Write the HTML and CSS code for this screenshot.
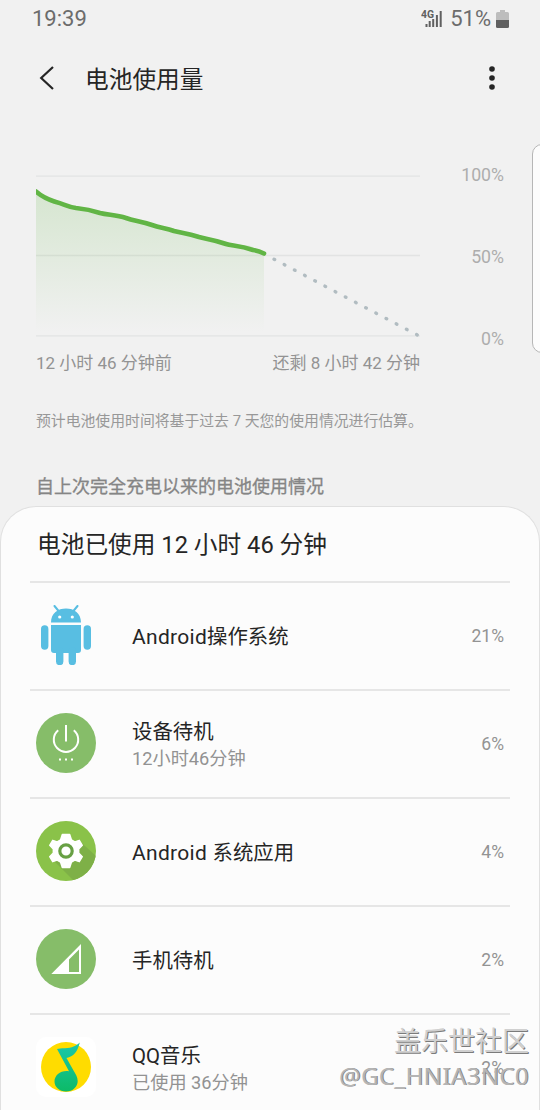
FILE: index.html
```html
<!DOCTYPE html>
<html lang="zh-CN">
<head>
<meta charset="utf-8">
<title>电池使用量</title>
<link rel="stylesheet" href="styles.css">
</head>
<body>
<main class="screen">
  <div class="status">
    <span class="clock">19:39</span>
    <svg class="signal" width="22" height="20" viewBox="0 0 22 20">
      <text class="network" x="0" y="9" textLength="13" lengthAdjust="spacingAndGlyphs">4G</text>
      <path d="M5.500 15v3M8.700 12v6M12.200 10v8M15.900 6v12M19.700 2v16" stroke="#606060" stroke-width="2"/>
    </svg>
    <span class="level">51%</span>
    <svg class="battery" width="13" height="18" viewBox="0 0 13 18">
      <path d="M4 0h5v2h2.500q1.500 0 1.500 1.500V10H0V3.500Q0 2 1.500 2H4z" fill="#bdbdbd"/>
      <path d="M0 10h13v6.500q0 1.500-1.500 1.500h-10Q0 18 0 16.500z" fill="#606060"/>
    </svg>
  </div>
  <header class="bar">
    <svg class="back" width="16" height="26" viewBox="0 0 16 26"><path d="M14 2L2.200 13L14 24" fill="none" stroke="#252525" stroke-width="2.200"/></svg>
    <h1 class="title">电池使用量</h1>
    <svg class="more" width="6" height="24" viewBox="0 0 6 24"><g fill="#252525"><circle cx="3" cy="3" r="2.800"/><circle cx="3" cy="12" r="2.800"/><circle cx="3" cy="21" r="2.800"/></g></svg>
  </header>
  <section class="usage">
    <div class="plot">
      <svg class="chart" width="384" height="172" viewBox="0 0 384 172">
        <defs><linearGradient id="charge" gradientUnits="userSpaceOnUse" x1="0" y1="22" x2="0" y2="162"><stop offset="0" stop-color="#68b84b" stop-opacity=".2"/><stop offset=".45" stop-color="#68b84b" stop-opacity=".11"/><stop offset="1" stop-color="#68b84b" stop-opacity="0"/></linearGradient></defs>
        <path d="M0 6.200H384M0 85.500H384M0 165.800H384" stroke="#e2e3e3" stroke-width="1.300"/>
        <path d="M0 22C8 29 16 31 34 37S52 38 64 43S82 44 98 50S118 55 137 61S153 62 163 66S179 67 192 72S208 73 217 77L228 83V163H0z" fill="url(#charge)"/>
        <path d="M0 21.500C8 28.500 14 30 20 32C28 34 32 37 40 38C50 39 55 40 64 43C72 45 80 45 90 48C98 51 105 51 116 55C124 58 130 58 138 61C145 63 151 63 163 67C170 69 176 69 190 74C196 76 203 75 217 80C223 81 225 82 228 83.500" fill="none" stroke="#61b545" stroke-width="4.600" stroke-linecap="round" stroke-linejoin="round"/>
        <path d="M238 89.200L381.300 165" fill="none" stroke="#b1bcc1" stroke-width="3.400" stroke-linecap="round" stroke-dasharray=".8 10.720"/>
      </svg>
      <div class="times"><span>12 小时 46 分钟前</span><span>还剩 8 小时 42 分钟</span></div>
    </div>
    <div class="scale"><span>100%</span><span>50%</span><span>0%</span></div>
  </section>
  <p class="note">预计电池使用时间将基于过去 7 天您的使用情况进行估算。</p>
  <h2 class="caption">自上次完全充电以来的电池使用情况</h2>
  <section class="card">
    <h3 class="total">电池已使用 12 小时 46 分钟</h3>
    <div class="row">
      <svg class="icon" width="60" height="60" viewBox="0 0 60 60">
        <path d="M18.500 1L23 6.500M41.500 1L37 6.500" stroke="#58bee2" stroke-width="2" stroke-linecap="round"/>
        <path d="M15 17.500C15 8 22 3.500 30 3.500s15 4.500 15 14zM15 20h30v25q0 3-3 3H18q-3 0-3-3z" fill="#58bee2"/>
        <path d="M8.700 24v17M51.300 24v17M23.700 46v10.500M36.300 46v10.500" stroke="#58bee2" stroke-width="7.400" stroke-linecap="round"/>
        <circle cx="23.700" cy="12" r="1.600" fill="#fff"/><circle cx="36.300" cy="12" r="1.600" fill="#fff"/>
      </svg>
      <div class="label"><span class="name"><span class="latin">Android</span>操作系统</span></div><span class="percent">21%</span>
    </div>
    <div class="row">
      <svg class="icon" width="60" height="60" viewBox="0 0 60 60">
        <circle cx="30" cy="30" r="30" fill="#86bd69"/>
        <path d="M22.200 17.300A12.200 12.200 0 1 0 37.800 17.300M30 12v16.500" fill="none" stroke="#fff" stroke-width="2"/>
        <path d="M23 46.500h2M29 46.500h2M35 46.500h2" stroke="#fff" stroke-width="2"/>
      </svg>
      <div class="label"><span class="name">设备待机</span><span class="detail">12小时46分钟</span></div><span class="percent">6%</span>
    </div>
    <div class="row">
      <svg class="icon" width="60" height="60" viewBox="0 0 60 60">
        <defs><clipPath id="disc"><circle cx="30" cy="30" r="30"/></clipPath></defs>
        <circle cx="30" cy="30" r="30" fill="#8ac249"/>
        <path d="M15 37L38 60H60V35L43.500 20z" fill="#7eb047" clip-path="url(#disc)"/>
        <path d="M26.300 13.500h7.400l1.700 5.300 3.400 2 4.500-1.500 3 5-3.600 3.700v4l3.600 3.700-3 5-4.500-1.500-3.400 2-1.700 5.300h-7.400l-1.700-5.300-3.400-2-4.500 1.500-3-5 3.600-3.700v-4l-3.600-3.700 3-5 4.500 1.500 3.400-2z" fill="#fff" stroke="#fff" stroke-width="1.400" stroke-linejoin="round"/>
        <circle cx="30" cy="30" r="6.200" fill="#fff" stroke="#68a044" stroke-width="3.200"/>
      </svg>
      <div class="label"><span class="name"><span class="latin">Android </span>系统应用</span></div><span class="percent">4%</span>
    </div>
    <div class="row">
      <svg class="icon" width="60" height="60" viewBox="0 0 60 60">
        <circle cx="30" cy="30" r="30" fill="#86bd69"/>
        <path d="M15.300 45L45 15V45zM33 30.500V43H43V20.500z" fill="#fff" fill-rule="evenodd"/>
      </svg>
      <div class="label"><span class="name">手机待机</span></div><span class="percent">2%</span>
    </div>
    <div class="row">
      <svg class="icon" width="60" height="60" viewBox="0 0 60 60">
        <defs><linearGradient id="melody" x1="0" y1="0" x2="0" y2="1"><stop offset="0" stop-color="#1ac8ac"/><stop offset="1" stop-color="#0dba67"/></linearGradient></defs>
        <rect width="60" height="60" rx="10" fill="#fff"/>
        <circle cx="30" cy="30" r="25" fill="#ffdc00"/>
        <path d="M43.800 5.500C40 9 36 11 29 11.300C25 11.400 23 11.500 21 12L33 34.200C25 33 18.500 38 18.500 44.500C18.500 50 23.500 54.500 30 54.500C37 54.500 41.700 49.500 41.700 44C41.700 40 39.500 37 37.500 33.500L30.500 21C37.500 19.500 41.500 15 43.800 5.500z" fill="url(#melody)"/>
      </svg>
      <div class="label"><span class="name">QQ音乐</span><span class="detail">已使用 36分钟</span></div><span class="percent">2%</span>
    </div>
  </section>
  <div class="edge"></div>
  <div class="watermark"><span class="community">盖乐世社区</span><span class="author">@GC_HNIA3NC0</span></div>
</main>
</body>
</html>
```
FILE: styles.css
```css
* { box-sizing: border-box; }
body { margin: 0; background: #f1f1f1; font-family: Roboto, "Noto Sans CJK SC", sans-serif; color: #252525; }
h1, h2, h3, p { margin: 0; font-weight: 400; }
svg { display: block; flex: none; }
.screen { position: relative; width: 540px; height: 1110px; overflow: hidden; white-space: nowrap; }
.status { display: flex; align-items: center; height: 37px; padding: 0 31px 0 32px; font-size: 22px; color: #6c6c6c; }
.clock { margin-right: auto; }
.signal { margin-right: 7px; }
.network { font-size: 10.500px; font-weight: 700; fill: #606060; }
.level { margin-right: 5px; }
.bar { display: flex; align-items: center; height: 82px; padding: 0 45px 0 39px; }
.title { margin: 3px auto 0 30px; font-size: 23.700px; line-height: 36px; }
.usage { display: flex; height: 262px; padding: 51px 36px 0; justify-content: space-between; }
.times { display: flex; justify-content: space-between; width: 384px; margin-top: 9px; font-size: 17px; line-height: 24px; color: #939393; }
.scale { display: flex; flex-direction: column; justify-content: space-between; height: 188px; margin-top: -7px; text-align: right; font-size: 17.700px; line-height: 24px; color: #adadad; }
.note { padding: 28px 36px 0; font-size: 14.850px; line-height: 24px; color: #989898; }
.caption { margin: 40px 0 0 36px; font-size: 18px; line-height: 28px; color: #858585; -webkit-text-stroke: .3px #858585; }
.card { height: 620px; margin-top: 5px; padding: 0 29px; border: 1px solid #e0e0e0; border-bottom: 0; border-radius: 36px 36px 0 0; background: #fcfcfc; }
.total { height: 74px; padding-left: 7px; font-size: 23.700px; line-height: 76px; }
.row { display: flex; align-items: center; height: 108px; padding: 0 6px; border-top: 2px solid #e6e6e6; }
.icon { position: relative; top: -1px; }
.label { display: flex; flex-direction: column; margin: 2px auto 0 36px; }
.name { font-size: 20.400px; line-height: 28px; }
.latin { font-size: 21px; letter-spacing: .3px; }
.detail { font-size: 18.200px; line-height: 26px; color: #929292; }
.percent { font-size: 17.500px; color: #939393; }
.edge { position: absolute; left: 532px; top: 144px; width: 20px; height: 209px; border: 1px solid #b6b6b6; border-radius: 10px; background: #fcfcfc; }
.watermark { position: absolute; right: 11px; top: 1024px; display: flex; flex-direction: column; align-items: flex-end; color: #d0d0d0; text-shadow: 1px 1px 0 #7b7b7b; }
.community { font-size: 27px; line-height: 36px; }
.author { font-family: "Noto Sans", sans-serif; font-size: 24px; line-height: 32px; letter-spacing: .4px; color: #b5b5b5; text-shadow: 1px 0 0 #858585; }
```
